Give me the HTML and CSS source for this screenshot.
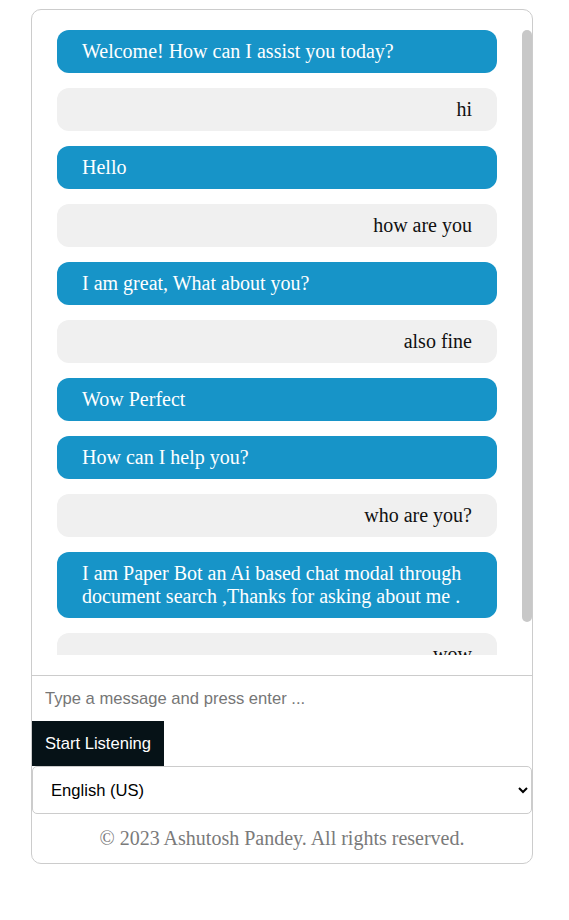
FILE: index.html
```html
<!DOCTYPE html>
<html lang="en">
<head>
<meta charset="utf-8">
<title>Paper Bot</title>
<link rel="stylesheet" href="styles.css">
</head>
<body>
<div class="chat-app">
  <div class="chat-pane">
    <div class="chat-box">
      <div class="message bot">Welcome! How can I assist you today?</div>
      <div class="message user">hi</div>
      <div class="message bot">Hello</div>
      <div class="message user">how are you</div>
      <div class="message bot">I am great, What about you?</div>
      <div class="message user">also fine</div>
      <div class="message bot">Wow Perfect</div>
      <div class="message bot">How can I help you?</div>
      <div class="message user">who are you?</div>
      <div class="message bot">I am Paper Bot an Ai based chat modal through document search ,Thanks for asking about me .</div>
      <div class="message user">wow</div>
      <div class="message bot">Thank you!</div>
    </div>
    <div class="scroll-thumb"></div>
  </div>
  <div class="chat-input">
    <input class="msg-input" type="text" placeholder="Type a message and press enter ...">
    <button class="listen-btn" type="button">Start Listening</button>
    <select class="lang-select">
      <option>English (US)</option>
      <option>Hindi</option>
    </select>
  </div>
  <footer class="footer">© 2023 Ashutosh Pandey. All rights reserved.</footer>
</div>
</body>
</html>
```

FILE: styles.css
```css
html, body {
  margin: 0;
  padding: 0;
  background: #fff;
}
body {
  font-family: "Liberation Serif", "Times New Roman", serif;
}
.chat-app {
  box-sizing: border-box;
  width: 502px;
  margin: 9px 0 0 31px;
  border: 1px solid #cccccc;
  border-radius: 10px;
  display: flex;
  flex-direction: column;
}
.chat-pane {
  position: relative;
  height: 625px;
  margin: 20px 0;
}
.chat-box {
  box-sizing: border-box;
  height: 100%;
  padding: 0 35px 0 25px;
  overflow: hidden;
  display: flex;
  flex-direction: column;
  gap: 15px;
}
.scroll-thumb {
  position: absolute;
  top: 0;
  right: 0;
  width: 10px;
  height: 592px;
  background: #c8c8c8;
  border-radius: 5px;
}
.message {
  flex: none;
  padding: 10px 25px;
  border-radius: 12px;
  font-size: 20px;
  line-height: 23px;
}
.message.bot {
  background: #1794c8;
  color: #ffffff;
  text-align: left;
}
.message.user {
  background: #f0f0f0;
  color: #111111;
  text-align: right;
}
.chat-input {
  display: flex;
  flex-direction: column;
  align-items: flex-start;
  border-top: 1px solid #cccccc;
}
.msg-input {
  box-sizing: border-box;
  width: 100%;
  height: 45px;
  padding: 0 13px;
  border: none;
  outline: none;
  font-family: "Liberation Sans", Arial, sans-serif;
  font-size: 16.6px;
  color: #222;
  background: transparent;
}
.msg-input::placeholder {
  color: #767676;
}
.listen-btn {
  box-sizing: border-box;
  height: 45px;
  width: 132px;
  padding: 0 13px;
  border: none;
  background: #061217;
  color: #ffffff;
  font-family: "Liberation Sans", Arial, sans-serif;
  font-size: 16.6px;
  text-align: left;
  white-space: nowrap;
  cursor: pointer;
}
.lang-select {
  box-sizing: border-box;
  width: 100%;
  height: 48px;
  padding: 0 14px;
  border: 1px solid #cccccc;
  border-radius: 5px;
  background: #ffffff;
  color: #000000;
  font-family: "Liberation Sans", Arial, sans-serif;
  font-size: 16.6px;
}
.footer {
  padding: 13px 0;
  text-align: center;
  color: #7a7a7a;
  font-size: 20px;
  line-height: 23px;
}
```
